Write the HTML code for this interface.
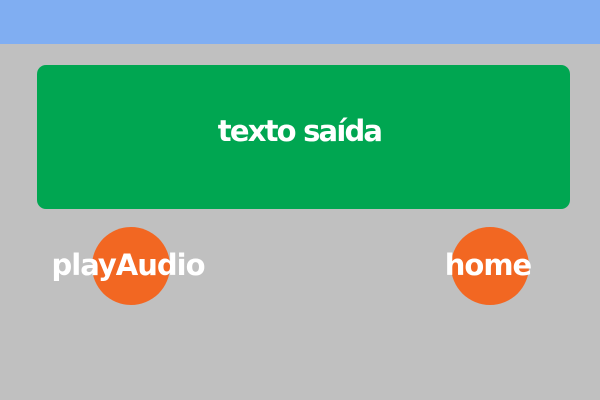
<!DOCTYPE html>
<html><head><meta charset="utf-8"><style>
html,body{margin:0;padding:0}
body{width:600px;height:400px;background:#c0c0c0;position:relative;overflow:hidden;font-family:"DejaVu Sans","Liberation Sans",sans-serif;font-weight:bold}
.top{position:absolute;left:0;top:0;width:600px;height:44px;background:#80aef2}
.box{position:absolute;left:37px;top:65px;width:533px;height:144px;background:#00a651;border-radius:9px;color:#fff;font-size:29px;text-align:center;line-height:132px;letter-spacing:-1.8px}
.box span{position:relative;left:-4px}
.c{position:absolute;width:78px;height:78px;border-radius:50%;background:#f26722;top:227px}
.t{position:absolute;color:#fff;font-size:29px;top:248px;white-space:nowrap;letter-spacing:-1px;transform:translateX(-50%)}
</style></head><body>
<div class="top"></div>
<div class="box"><span>texto saída</span></div>
<div class="c" style="left:92px"></div>
<div class="c" style="left:451px"></div>
<div class="t" style="left:128px">playAudio</div>
<div class="t" style="left:488px">home</div>
</body></html>
